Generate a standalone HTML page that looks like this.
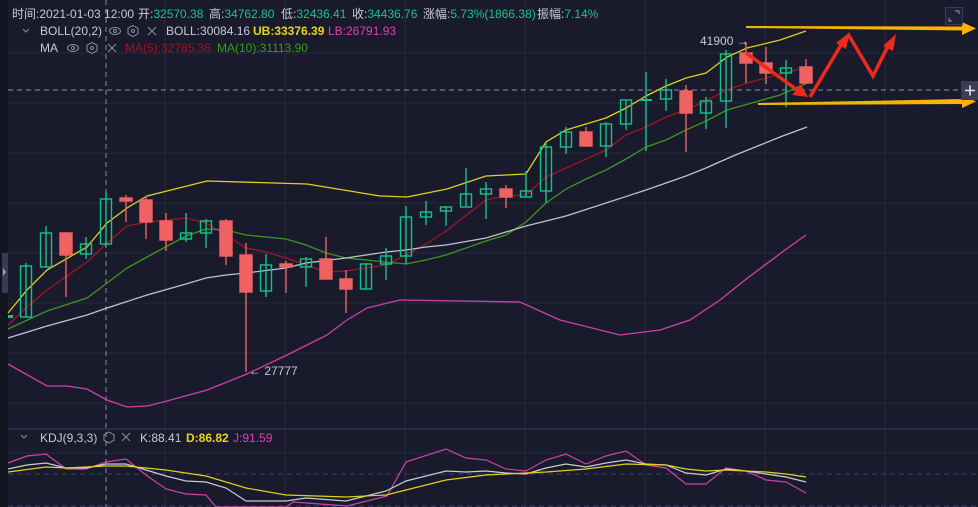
<!DOCTYPE html>
<html><head><meta charset="utf-8"><style>
html,body{margin:0;padding:0;background:#191b2c;width:978px;height:507px;overflow:hidden}
svg{display:block}
text{font-family:"Liberation Sans","Noto Sans CJK SC",sans-serif;font-size:12px}
</style></head><body>
<svg width="978" height="507" viewBox="0 0 978 507" xmlns="http://www.w3.org/2000/svg">
<rect width="978" height="507" fill="#191b2c"/>
<rect x="0" y="0" width="8" height="507" fill="#12141f"/>
<rect x="2" y="253" width="6" height="40" fill="#353b58"/>
<path d="M3 268 L6 272 L3 276Z" fill="#9aa0b8"/>
<g stroke="#242839" stroke-width="1">
<line x1="8" y1="53" x2="978" y2="53"/><line x1="8" y1="103" x2="978" y2="103"/><line x1="8" y1="153" x2="978" y2="153"/><line x1="8" y1="203" x2="978" y2="203"/><line x1="8" y1="253" x2="978" y2="253"/><line x1="8" y1="303" x2="978" y2="303"/><line x1="8" y1="353" x2="978" y2="353"/><line x1="8" y1="403" x2="978" y2="403"/><line x1="8" y1="453" x2="978" y2="453"/>
<line x1="165" y1="0" x2="165" y2="507"/><line x1="285" y1="0" x2="285" y2="507"/><line x1="405" y1="0" x2="405" y2="507"/><line x1="525" y1="0" x2="525" y2="507"/><line x1="645" y1="0" x2="645" y2="507"/><line x1="765" y1="0" x2="765" y2="507"/><line x1="885" y1="0" x2="885" y2="507"/>
</g>
<line x1="8" y1="429" x2="978" y2="429" stroke="#2e3347" stroke-width="1.5"/>
<line x1="8" y1="474" x2="978" y2="474" stroke="#3a4270" stroke-dasharray="5,4"/>
<line x1="8" y1="506" x2="978" y2="506" stroke="#3a4270" stroke-dasharray="5,4"/>
<line x1="8" y1="90" x2="965" y2="90" stroke="#8a8e9c" stroke-dasharray="5,4"/>
<line x1="106" y1="0" x2="106" y2="507" stroke="#8a8e9c" stroke-dasharray="5,4"/>

<g fill="none" stroke-width="1.3">
<polyline stroke="#e0d020" points="8,313 27,290 47,270 87,247 107,223 127,208 147,196 207,181 307,184 380,196 407,197 447,189 486,176 526,174 546,142 566,130 586,124 606,118 626,108 646,96 666,86 686,78 706,73 727,57 747,48 780,40 806,31"/>
<polyline stroke="#a01525" points="8,325 27,307 47,290 87,262 107,243 127,226 147,222 186,218 206,223 226,235 246,248 266,252 286,258 306,265 326,272 346,271 386,265 406,255 426,244 446,231 486,200 506,196 526,195 546,177 566,168 586,159 606,150 626,135 646,127 666,117 686,110 706,101 727,90 747,83 807,67"/>
<polyline stroke="#3d961d" points="8,329 47,311 87,298 107,283 127,268 147,257 186,236 206,229 226,230 246,235 286,239 306,245 326,253 346,258 386,262 406,264 426,260 446,255 486,241 506,235 526,222 546,203 566,189 586,179 606,170 626,159 646,147 666,140 686,130 706,121 727,110 780,95 807,83"/>
<polyline stroke="#c0c2d0" points="8,338 47,326 87,315 107,308 147,295 186,284 206,278 226,275 246,273 286,268 306,263 346,258 386,252 406,250 426,247 446,245 486,238 526,226 566,216 606,203 646,190 666,183 686,176 706,168 733,156 780,137 807,127"/>
<polyline stroke="#d040a8" points="8,364 47,386 67,386 87,389 107,400 127,407 147,406 167,401 207,390 247,374 287,355 327,335 347,320 367,308 400,300 520,302 560,320 620,335 660,330 690,320 720,300 745,280 785,250 806,235"/>
</g>

<g stroke-width="1.4">
<g stroke="#13c28a" fill="none">
<line x1="26" y1="263" x2="26" y2="317"/><rect x="20.5" y="266" width="11" height="51"/>
<line x1="46" y1="226" x2="46" y2="267"/><rect x="40.5" y="233" width="11" height="34"/>
<line x1="86" y1="237" x2="86" y2="259"/><rect x="80.5" y="244" width="11" height="10"/>
<line x1="106" y1="192" x2="106" y2="247"/><rect x="100.5" y="199" width="11" height="45"/>
<line x1="186" y1="213" x2="186" y2="242"/><rect x="180.5" y="233" width="11" height="6"/>
<line x1="206" y1="219" x2="206" y2="248"/><rect x="200.5" y="221" width="11" height="12"/>
<line x1="266" y1="254" x2="266" y2="297"/><rect x="260.5" y="265" width="11" height="26"/>
<line x1="306" y1="257" x2="306" y2="287"/><rect x="300.5" y="259" width="11" height="8"/>
<line x1="366" y1="263" x2="366" y2="289"/><rect x="360.5" y="264" width="11" height="25"/>
<line x1="386" y1="248" x2="386" y2="280"/><rect x="380.5" y="256" width="11" height="8"/>
<line x1="406" y1="206" x2="406" y2="264"/><rect x="400.5" y="217" width="11" height="39"/>
<line x1="426" y1="201" x2="426" y2="225"/><rect x="420.5" y="212" width="11" height="5"/>
<line x1="446" y1="206" x2="446" y2="226"/><rect x="440.5" y="207" width="11" height="4"/>
<line x1="466" y1="168" x2="466" y2="207"/><rect x="460.5" y="194" width="11" height="13"/>
<line x1="486" y1="182" x2="486" y2="219"/><rect x="480.5" y="189" width="11" height="5"/>
<line x1="526" y1="171" x2="526" y2="197"/><rect x="520.5" y="191" width="11" height="6"/>
<line x1="546" y1="143" x2="546" y2="203"/><rect x="540.5" y="147" width="11" height="44"/>
<line x1="566" y1="127" x2="566" y2="154"/><rect x="560.5" y="132" width="11" height="15"/>
<line x1="606" y1="122" x2="606" y2="157"/><rect x="600.5" y="124" width="11" height="22"/>
<line x1="626" y1="100" x2="626" y2="130"/><rect x="620.5" y="100" width="11" height="24"/>
<line x1="646" y1="72" x2="646" y2="151"/><line x1="640" y1="100" x2="652" y2="100" stroke-width="2"/>
<line x1="666" y1="79" x2="666" y2="111"/><rect x="660.5" y="90" width="11" height="9"/>
<line x1="706" y1="97" x2="706" y2="129"/><rect x="700.5" y="101" width="11" height="12"/>
<line x1="726" y1="50" x2="726" y2="128"/><rect x="720.5" y="54" width="11" height="47"/>
<line x1="786" y1="60" x2="786" y2="107"/><rect x="780.5" y="68" width="11" height="5"/>
</g>
<g stroke="#f06262" fill="#f06262">
<line x1="66" y1="232" x2="66" y2="297"/><rect x="60" y="233" width="12" height="22"/>
<line x1="126" y1="195" x2="126" y2="222"/><rect x="120" y="198" width="12" height="3"/>
<line x1="146" y1="196" x2="146" y2="239"/><rect x="140" y="200" width="12" height="22"/>
<line x1="166" y1="213" x2="166" y2="251"/><rect x="160" y="221" width="12" height="19"/>
<line x1="226" y1="219" x2="226" y2="265"/><rect x="220" y="221" width="12" height="35"/>
<line x1="246" y1="243" x2="246" y2="372"/><rect x="240" y="255" width="12" height="37"/>
<line x1="286" y1="261" x2="286" y2="293"/><rect x="280" y="264" width="12" height="3"/>
<line x1="326" y1="237" x2="326" y2="279"/><rect x="320" y="259" width="12" height="20"/>
<line x1="346" y1="270" x2="346" y2="313"/><rect x="340" y="279" width="12" height="10"/>
<line x1="506" y1="185" x2="506" y2="208"/><rect x="500" y="189" width="12" height="8"/>
<line x1="586" y1="127" x2="586" y2="147"/><rect x="580" y="132" width="12" height="14"/>
<line x1="686" y1="85" x2="686" y2="152"/><rect x="680" y="91" width="12" height="22"/>
<line x1="746" y1="42" x2="746" y2="83"/><rect x="740" y="53" width="12" height="10"/>
<line x1="766" y1="47" x2="766" y2="84"/><rect x="760" y="63" width="12" height="10"/>
<line x1="806" y1="59" x2="806" y2="83"/><rect x="800" y="67" width="12" height="16"/>
</g>
<rect x="8" y="315" width="5" height="3" fill="#13c28a" stroke="none"/>
</g>

<text x="700" y="45" fill="#c8cad4">41900 →</text>
<text x="249" y="375" fill="#c8cad4">← 27777</text>

<defs>
<linearGradient id="yg" x1="0" x2="1" y1="0" y2="0"><stop offset="0" stop-color="#e8b800"/><stop offset="1" stop-color="#ffb300"/></linearGradient>
</defs>
<polygon points="746,26 965,26.5 965,30.5 746,28" fill="url(#yg)"/>
<polygon points="962,22 976,28.5 962,35" fill="#ffb000"/>
<polygon points="758,103 965,99 965,104 758,105" fill="url(#yg)"/>
<polygon points="962,95 976,101.5 962,108" fill="#ffb000"/>
<g stroke="#f02a1a" stroke-width="3.5" fill="none" stroke-linejoin="miter">
<line x1="746" y1="53" x2="800" y2="92"/>
<polyline points="810,97 844,40"/>
<polyline points="848,34 873,76 890,42"/>
</g>
<g fill="#f02a1a">
<polygon points="808,97 792,95 801,85"/>
<polygon points="850,32 846,49 836,43"/>
<polygon points="896,34 893,51 883,46"/>
</g>

<g fill="none" stroke-width="1.2">
<polyline stroke="#d040a8" points="8,463 27,456 46,454 66,469 86,469 106,462 126,459 146,475 166,489 186,494 206,495 216,507 286,507 293,502 347,506 367,501 387,496 406,462 446,449 466,458 486,460 506,469 526,471 546,460 566,454 586,464 606,456 626,451 646,465 666,468 686,484 706,484 726,468 746,471 766,480 786,482 806,493"/>
<polyline stroke="#c8cad4" points="8,469 27,465 46,463 66,468 86,468 106,464 126,464 146,470 166,476 186,481 206,482 226,488 246,501 286,501 306,498 346,501 366,496 386,491 406,481 446,471 466,472 486,471 506,473 526,474 546,468 566,464 586,467 606,463 626,460 646,464 666,465 686,473 706,475 726,469 746,471 766,474 786,477 806,482"/>
<polyline stroke="#e0d020" points="8,472 46,467 66,468 106,466 126,466 166,470 206,476 246,488 286,495 346,497 386,495 406,490 446,480 486,475 526,473 546,472 586,469 626,464 666,465 686,469 706,471 726,470 766,472 786,474 806,477"/>
</g>

<text y="18" fill="#c8cad4"><tspan x="12">时间:2021-01-03 12:00</tspan></text>
<text y="18"><tspan x="138" fill="#c8cad4">开:</tspan><tspan fill="#17c38c">32570.38</tspan></text>
<text y="18"><tspan x="209" fill="#c8cad4">高:</tspan><tspan fill="#17c38c">34762.80</tspan></text>
<text y="18"><tspan x="281" fill="#c8cad4">低:</tspan><tspan fill="#17c38c">32436.41</tspan></text>
<text y="18"><tspan x="352" fill="#c8cad4">收:</tspan><tspan fill="#17c38c">34436.76</tspan></text>
<text y="18"><tspan x="423" fill="#c8cad4">涨幅:</tspan><tspan fill="#17c38c">5.73%(1866.38)</tspan></text>
<text y="18"><tspan x="537" fill="#c8cad4">振幅:</tspan><tspan fill="#17c38c">7.14%</tspan></text>

<path d="M23 29 L26 32 L29 29" stroke="#8a8e9c" fill="none"/>
<text x="40" y="35" fill="#c8cad4">BOLL(20,2)</text>
<g stroke="#8a8e9c" fill="none" stroke-width="1">
<ellipse cx="115" cy="31" rx="5.5" ry="3.5"/><circle cx="115" cy="31" r="1.5"/>
<polygon points="133,25.5 138,28.3 138,33.7 133,36.5 128,33.7 128,28.3"/><circle cx="133" cy="31" r="1.5"/>
<path d="M148 27 L156 35 M156 27 L148 35"/>
<ellipse cx="73" cy="48" rx="5.5" ry="3.5"/><circle cx="73" cy="48" r="1.5"/>
<polygon points="92,42.5 97,45.3 97,50.7 92,53.5 87,50.7 87,45.3"/><circle cx="92" cy="48" r="1.5"/>
<path d="M108 44 L116 52 M116 44 L108 52"/>
</g>
<text y="35"><tspan x="166" fill="#c8cad4">BOLL:30084.16</tspan><tspan x="253" fill="#e6d61c" font-weight="bold">UB:33376.39</tspan><tspan x="328" fill="#e040b0">LB:26791.93</tspan></text>
<text x="40" y="52" fill="#c8cad4">MA</text>
<text y="52"><tspan x="125" fill="#a31520">MA(5):32785.36</tspan><tspan x="217" fill="#3a9a1a">MA(10):31113.90</tspan></text>

<path d="M21 435 L24 438 L27 435" stroke="#8a8e9c" fill="none"/>
<text x="40" y="442" fill="#c8cad4">KDJ(9,3,3)</text>
<g stroke="#8a8e9c" fill="none">
<polygon points="109,432 114,434.8 114,440.2 109,443 104,440.2 104,434.8"/>
<path d="M122 433 L130 441 M130 433 L122 441"/>
</g>
<text y="442"><tspan x="140" fill="#c8cad4">K:88.41</tspan><tspan x="186" fill="#e6d61c" font-weight="bold">D:86.82</tspan><tspan x="233" fill="#e040b0">J:91.59</tspan></text>

<rect x="945.5" y="7.5" width="17" height="17" fill="#1e2236" stroke="#3a3f55"/>
<path d="M949 18 V21 H952 M955 11 H959 V14" stroke="#9aa0b8" fill="none"/>
<rect x="961" y="81" width="17" height="19" fill="#3a3f55"/>
<path d="M965 90.5 H975 M970 85.5 V95.5" stroke="#e0e2ea" stroke-width="1.6"/>
</svg>
</body></html>
